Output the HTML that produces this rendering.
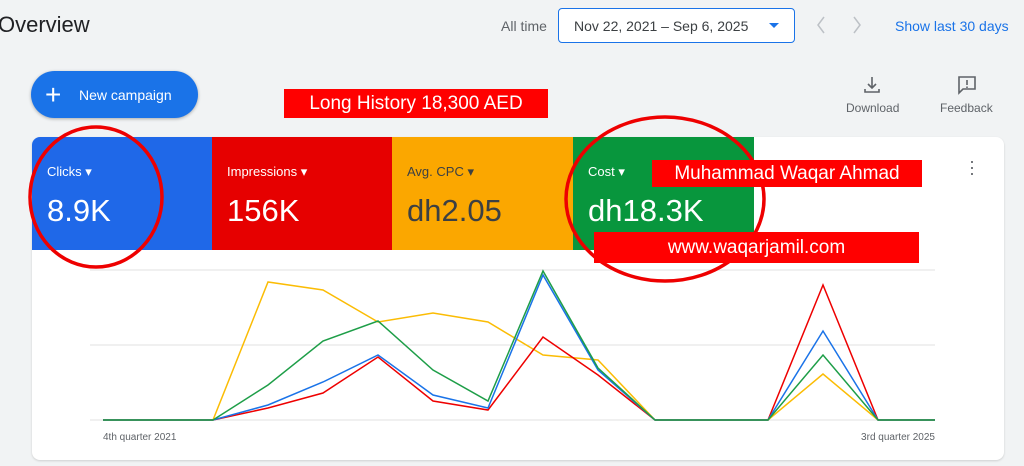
<!DOCTYPE html><html><head><style>
body{margin:0;width:1024px;height:466px;background:#f1f3f4;font-family:"Liberation Sans",sans-serif;position:relative;overflow:hidden;color:#202124}
.a{position:absolute}
.tile{position:absolute;top:137px;height:113px;width:181px;color:#fff}
.tile .l{position:absolute;left:15px;top:27px;font-size:13px}
.tile .v{position:absolute;left:15px;top:56px;font-size:31px}
.red{background:#f00;color:#fff;position:absolute;font-size:19px}
</style></head><body>
<div class="a" style="left:-2px;top:12px;font-size:22px;color:#202124">Overview</div>
<div class="a" style="left:501px;top:18px;font-size:14px;color:#5f6368">All time</div>
<div class="a" style="left:558px;top:8px;width:235px;height:33px;border:1.5px solid #1a73e8;border-radius:4px;background:#fff"></div>
<div class="a" style="left:574px;top:18px;font-size:14px;color:#3c4043">Nov 22, 2021 – Sep 6, 2025</div>
<div class="a" style="left:769px;top:23px;width:0;height:0;border-left:5px solid transparent;border-right:5px solid transparent;border-top:5px solid #1a73e8"></div>
<svg class="a" style="left:812px;top:15px" width="60" height="20" fill="none" stroke="#bdc1c6" stroke-width="1.5"><path d="M12 2L6 10l6 8M42 2l6 8-6 8"/></svg>
<div class="a" style="left:895px;top:18px;font-size:14px;color:#1a73e8">Show last 30 days</div>
<div class="a" style="left:31px;top:71px;width:167px;height:47px;border-radius:24px;background:#1a73e8;box-shadow:0 1px 3px rgba(0,0,0,.3)"></div>
<div class="a" style="left:45px;top:79px;font-size:28px;color:#fff;font-weight:300">+</div>
<div class="a" style="left:79px;top:87px;font-size:14px;color:#fff">New campaign</div>
<svg class="a" style="left:862px;top:75px" width="20" height="20" viewBox="0 0 20 20" fill="none" stroke="#5f6368" stroke-width="1.6"><path d="M10 2v11M6 9l4 4 4-4M3 14v3h14v-3"/></svg>
<div class="a" style="left:846px;top:101px;font-size:12px;color:#5f6368">Download</div>
<svg class="a" style="left:956px;top:74px" width="22" height="22" viewBox="0 0 22 22" fill="none" stroke="#5f6368" stroke-width="1.6"><path d="M3 3h16v12H7l-4 4z"/><path d="M11 6v5M11 12.5v1.5"/></svg>
<div class="a" style="left:940px;top:101px;font-size:12px;color:#5f6368">Feedback</div>
<div class="a" style="left:32px;top:137px;width:972px;height:323px;background:#fff;border-radius:8px;box-shadow:0 1px 2px rgba(0,0,0,.15)"></div>
<div class="tile" style="left:32px;background:#1f68e8;border-top-left-radius:8px"><div class="l">Clicks ▾</div><div class="v">8.9K</div></div>
<div class="tile" style="left:212px;background:#e60000"><div class="l">Impressions ▾</div><div class="v">156K</div></div>
<div class="tile" style="left:392px;background:#fba700;color:#3c4043"><div class="l">Avg. CPC ▾</div><div class="v">dh2.05</div></div>
<div class="tile" style="left:573px;background:#08963d"><div class="l">Cost ▾</div><div class="v">dh18.3K</div></div>
<div class="a" style="left:969px;top:158px;font-size:18px;color:#5f6368;line-height:6px">·<br>·<br>·</div>
<svg class="a" style="left:0;top:0" width="1024" height="466">
<g stroke="#e0e0e0" stroke-width="1"><line x1="90" y1="270" x2="935" y2="270"/><line x1="90" y1="345" x2="935" y2="345"/><line x1="90" y1="420" x2="935" y2="420"/></g>
<g fill="none" stroke-width="1.5">
<polyline stroke="#fbbc04" points="103,420 213,420 268,282 323,290 378,322 433,313 488,322 543,355 598,360 655,420 768,420 823,374 878,420 935,420"/>
<polyline stroke="#e00" points="103,420 213,420 268,408 323,393 378,357 433,401 488,410 543,337 598,375 655,420 768,420 823,285 878,420 935,420"/>
<polyline stroke="#1a73e8" points="103,420 213,420 268,405 323,382 378,355 433,395 488,408 543,275 598,370 655,420 768,420 823,331 878,420 935,420"/>
<polyline stroke="#1e9e48" points="103,420 213,420 268,385 323,341 378,321 433,370 488,401 543,271 598,368 655,420 768,420 823,355 878,420 935,420"/>
</g>
<g fill="none" stroke="#e00" stroke-width="3.5"><ellipse cx="96" cy="197" rx="66" ry="70"/><ellipse cx="665" cy="199" rx="99" ry="82"/></g>
<text x="103" y="440" font-size="10" fill="#5f6368" font-family="Liberation Sans">4th quarter 2021</text>
<text x="935" y="440" font-size="10" fill="#5f6368" font-family="Liberation Sans" text-anchor="end">3rd quarter 2025</text>
</svg>
<div class="red" style="left:284px;top:89px;width:264px;height:29px;line-height:29px;text-align:center">Long History 18,300 AED</div>
<div class="red" style="left:652px;top:160px;width:270px;height:27px;line-height:27px;text-align:center">Muhammad Waqar Ahmad</div>
<div class="red" style="left:594px;top:232px;width:325px;height:31px;line-height:31px;text-align:center">www.waqarjamil.com</div>
</body></html>
